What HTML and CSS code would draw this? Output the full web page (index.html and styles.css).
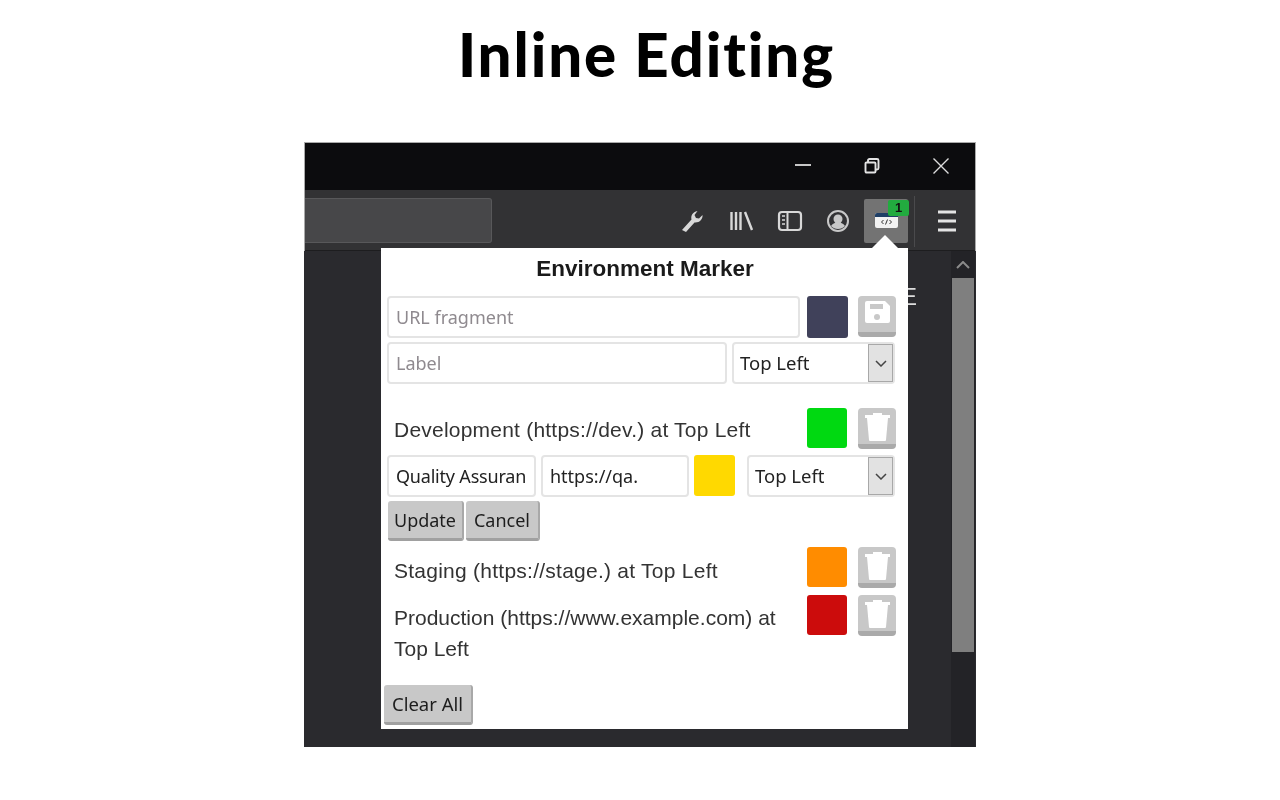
FILE: index.html
```html
<!DOCTYPE html>
<html lang="en">

<head>
    <meta charset="UTF-8">
    <meta name="viewport" content="width=device-width, initial-scale=1.0">
    <title>Inline Editing</title>
    <link rel="stylesheet" href="styles.css">
</head>

<body>

    <h1 class="page-title">Inline Editing</h1>

    <div class="window">
        <div class="titlebar">
            <svg class="win-icon" width="16" height="16" viewBox="0 0 16 16"><path d="M0 7h16" stroke="#ddd" stroke-width="1.800" fill="none"/></svg>
            <svg class="win-icon" width="16" height="16" viewBox="0 0 16 16"><path d="M4 4V2.500A1.500 1.500 0 0 1 5.500 1H13a1.500 1.500 0 0 1 1.500 1.500V10a1.500 1.500 0 0 1-1.500 1.500h-1.500M2.500 4.500h8a1 1 0 0 1 1 1v8a1 1 0 0 1-1 1h-8a1 1 0 0 1-1-1v-8a1 1 0 0 1 1-1z" stroke="#e4e4e4" stroke-width="1.900" fill="none"/></svg>
            <svg class="win-icon" width="16" height="16" viewBox="0 0 16 16"><path d="M0.500 0.500l15 15M15.500 0.500l-15 15" stroke="#ddd" stroke-width="1.400" fill="none"/></svg>
        </div>

        <div class="toolbar">
            <div class="urlbar"></div>
            <div class="tool-icons">
                <div class="tool tool-wrench">
                    <svg width="24" height="24" viewBox="0 0 24 24"><path d="M2 21l9.500-10.500c-1-3.500 1-7.500 6-8.500l-3 4 1.500 3 3 .5 3.500-3.500c.5 4-3 8-8 7.500l-8.500 9.500z" fill="#d8d8d8"/></svg>
                </div>
                <div class="tool">
                    <svg width="26" height="22" viewBox="0 0 26 22"><path d="M2.500 2v18M7 2v18M11.500 2v18M16 2l7 18" stroke="#d8d8d8" stroke-width="2.400" fill="none"/></svg>
                </div>
                <div class="tool">
                    <svg width="26" height="22" viewBox="0 0 26 22"><rect x="2" y="2" width="22" height="18" rx="3" stroke="#d8d8d8" stroke-width="2.200" fill="none"/><path d="M10.500 2v18" stroke="#d8d8d8" stroke-width="2"/><path d="M5 6h3M5 10h3M5 14h3" stroke="#d8d8d8" stroke-width="1.500"/></svg>
                </div>
                <div class="tool">
                    <svg width="24" height="24" viewBox="0 0 24 24"><circle cx="12" cy="12" r="10" stroke="#c8c8c8" stroke-width="2" fill="none"/><circle cx="12" cy="10" r="4.500" fill="#c8c8c8"/><path d="M5 17c2-3 4-3.500 7-3.500s5 .5 7 3.500c-2 2-4 3-7 3s-5-1-7-3z" fill="#c8c8c8"/></svg>
                </div>
                <div class="tool tool-active">
                    <svg width="26" height="22" viewBox="0 0 26 22"><rect x="2" y="3" width="23" height="15" rx="2" fill="#f2f2f2"/><path d="M2 5a2 2 0 0 1 2-2h19a2 2 0 0 1 2 2v2H2z" fill="#1f3f66"/><path d="M10.500 10l-2 2 2 2M16.500 10l2 2-2 2M14.500 9.500l-2 5" stroke="#333" stroke-width="1" fill="none"/></svg>
                    <span class="badge">1</span>
                </div>
            </div>
            <div class="tool-sep"></div>
            <div class="tool menu-tool">
                <svg width="20" height="22" viewBox="0 0 20 22"><path d="M1 2h18M1 11h18M1 20h18" stroke="#e4e4e4" stroke-width="3"/></svg>
            </div>
        </div>

        <div class="content">
            <span class="behind-text">E</span>
            <div class="scrollbar">
                <div class="scroll-up">
                    <svg width="14" height="8" viewBox="0 0 14 8"><path d="M1 7l6-6 6 6" stroke="#8a8a8a" stroke-width="2" fill="none"/></svg>
                </div>
                <div class="scroll-thumb"></div>
            </div>
        </div>

        <div class="popup">
            <div class="popup-arrow"></div>
            <div class="popup-title">Environment Marker</div>

            <div class="row row-new">
                <input class="field field-url" type="text" placeholder="URL fragment">
                <div class="swatch swatch-new"></div>
                <button class="icon-btn" type="button">
                    <svg width="25" height="22" viewBox="0 0 25 22"><path d="M2 0h18l5 5v15a2 2 0 0 1-2 2H2a2 2 0 0 1-2-2V2a2 2 0 0 1 2-2z" fill="#fff"/><rect x="5" y="3" width="13" height="5" fill="#c8c8c8"/><circle cx="12" cy="16" r="3" fill="#c8c8c8"/></svg>
                </button>
            </div>
            <div class="row row-label">
                <input class="field field-label" type="text" placeholder="Label">
                <div class="select select-wide">
                    <span class="select-value">Top Left</span>
                    <span class="select-arrow"><svg width="12" height="7" viewBox="0 0 12 7"><path d="M1 1l5 5 5-5" stroke="#444" stroke-width="1.500" fill="none"/></svg></span>
                </div>
            </div>

            <div class="row env env-dev">
                <div class="env-text">Development (https://dev.) at Top Left</div>
                <div class="swatch swatch-green"></div>
                <button class="icon-btn" type="button">
                    <svg width="25" height="28" viewBox="0 0 25 28"><path d="M0 3.500h25M8 1.500h9" stroke="#fff" stroke-width="3" fill="none"/><path d="M2 5h21l-2 22a1 1 0 0 1-1 1H5a1 1 0 0 1-1-1z" fill="#fff"/></svg>
                </button>
            </div>

            <div class="row row-edit">
                <input class="field field-name" type="text" value="Quality Assurance">
                <input class="field field-pattern" type="text" value="https://qa.">
                <div class="swatch swatch-yellow"></div>
                <div class="select select-narrow">
                    <span class="select-value">Top Left</span>
                    <span class="select-arrow"><svg width="12" height="7" viewBox="0 0 12 7"><path d="M1 1l5 5 5-5" stroke="#444" stroke-width="1.500" fill="none"/></svg></span>
                </div>
            </div>
            <div class="row row-actions">
                <button class="text-btn update-btn" type="button">Update</button>
                <button class="text-btn cancel-btn" type="button">Cancel</button>
            </div>

            <div class="row env env-stage">
                <div class="env-text">Staging (https://stage.) at Top Left</div>
                <div class="swatch swatch-orange"></div>
                <button class="icon-btn" type="button">
                    <svg width="25" height="28" viewBox="0 0 25 28"><path d="M0 3.500h25M8 1.500h9" stroke="#fff" stroke-width="3" fill="none"/><path d="M2 5h21l-2 22a1 1 0 0 1-1 1H5a1 1 0 0 1-1-1z" fill="#fff"/></svg>
                </button>
            </div>
            <div class="row env env-prod">
                <div class="env-text">Production (https://www.example.com) at Top Left</div>
                <div class="swatch swatch-red"></div>
                <button class="icon-btn" type="button">
                    <svg width="25" height="28" viewBox="0 0 25 28"><path d="M0 3.500h25M8 1.500h9" stroke="#fff" stroke-width="3" fill="none"/><path d="M2 5h21l-2 22a1 1 0 0 1-1 1H5a1 1 0 0 1-1-1z" fill="#fff"/></svg>
                </button>
            </div>

            <button class="text-btn clear-btn" type="button">Clear All</button>
        </div>
    </div>

</body>

</html>
```

FILE: styles.css
```css
html,
body {
    margin: 0;
    height: 800px;
    background-color: #fff;
    overflow: hidden;
}

.page-title {
    margin: 0;
    padding: 19px 0 0 13px;
    height: 142px;
    box-sizing: border-box;
    text-align: center;
    font-family: 'Lato', sans-serif;
    font-weight: 900;
    font-size: 60px;
    line-height: 70px;
    letter-spacing: 1.9px;
    font-variant-ligatures: none;
    color: #000;
    filter: blur(0.4px);
}

.window {
    position: relative;
    width: 672px;
    height: 605px;
    margin-left: 304px;
    display: flex;
    flex-direction: column;
    outline: 1px solid #aaa;
    outline-offset: -1px;
    filter: blur(0.4px);
}

.titlebar {
    height: 48px;
    background-color: #0c0c0e;
    display: flex;
    justify-content: flex-end;
    align-items: center;
    gap: 53px;
    padding-right: 27px;
    box-sizing: border-box;
}

.toolbar {
    height: 61px;
    background-color: #323234;
    border-bottom: 1px solid #1d1d1f;
    box-sizing: border-box;
    display: flex;
    align-items: flex-start;
    padding-top: 8px;
}

.urlbar {
    width: 188px;
    height: 45px;
    box-sizing: border-box;
    background-color: #474749;
    border: 1px solid #58585a;
    border-left: 0;
    border-radius: 0 3px 3px 0;
}

.tool-icons {
    display: flex;
    gap: 4px;
    margin: 1px 0 0 180px;
}

.tool {
    position: relative;
    width: 44px;
    height: 44px;
    display: flex;
    justify-content: center;
    align-items: center;
}

.tool-wrench {
    padding-right: 4px;
    box-sizing: border-box;
}

.tool-active {
    background-color: #737373;
    border-radius: 2px;
}

.badge {
    position: absolute;
    top: 1px;
    right: -1px;
    width: 21px;
    height: 16px;
    background-color: #22ab3f;
    border-radius: 2px;
    color: #111;
    font-family: 'Liberation Sans', sans-serif;
    font-weight: 700;
    font-size: 13px;
    line-height: 16px;
    text-align: center;
}

.tool-sep {
    width: 1px;
    height: 51px;
    margin: -2px 10px 0 6px;
    background-color: #4a4a4c;
}

.menu-tool {
    margin-top: 1px;
}

.content {
    position: relative;
    flex: 1;
    background-color: #2a2a2e;
    display: flex;
    justify-content: flex-end;
}

.behind-text {
    position: absolute;
    left: 597px;
    top: 32px;
    color: #ddd;
    font-family: 'Liberation Sans', sans-serif;
    font-size: 24px;
}

.scrollbar {
    width: 24px;
    margin-right: 1px;
    background-color: #232327;
}

.scroll-up {
    height: 27px;
    display: flex;
    justify-content: center;
    align-items: center;
}

.scroll-thumb {
    height: 374px;
    margin: 0 1px;
    background-color: #7f7f7f;
}

.popup {
    position: absolute;
    left: 77px;
    top: 106px;
    width: 527px;
    height: 481px;
    box-sizing: border-box;
    padding: 6px 11px 0 6px;
    background-color: #fff;
    font-family: 'Liberation Sans', sans-serif;
    color: #222;
}

.popup-arrow {
    position: absolute;
    right: 10px;
    top: -13px;
    width: 0;
    height: 0;
    border-left: 13px solid transparent;
    border-right: 13px solid transparent;
    border-bottom: 13px solid #fff;
}

.popup-title {
    height: 42px;
    padding-left: 6px;
    text-align: center;
    font-weight: 700;
    font-size: 22.5px;
    line-height: 30px;
    color: #1a1a1a;
}

.row {
    display: flex;
    align-items: flex-start;
}

.row-new {
    height: 46px;
}

.row-new .icon-btn {
    margin-left: 10px;
}

.row-label {
    height: 66px;
    gap: 5px;
}

.row-edit {
    height: 46px;
    gap: 5px;
}

.row-actions {
    height: 46px;
    gap: 2px;
    padding-left: 1px;
}

.field {
    height: 42px;
    box-sizing: border-box;
    padding: 0 7px;
    border: 2px solid #e4e4e4;
    border-radius: 4px;
    background-color: #fff;
    font-family: 'Noto Sans', sans-serif;
    font-size: 18px;
    color: #222;
    outline: none;
}

.field::placeholder {
    color: #8f8a8f;
    opacity: 1;
}

.field-url {
    width: 413px;
}

.field-label {
    width: 340px;
}

.field-name {
    width: 149px;
    letter-spacing: -0.2px;
}

.field-pattern {
    width: 148px;
}

.swatch {
    width: 40px;
    height: 40px;
    border-radius: 3px;
    flex-shrink: 0;
}

.swatch-new {
    width: 41px;
    height: 42px;
    margin-left: 7px;
    background-color: #40415a;
}

.swatch-green {
    background-color: #00d911;
}

.swatch-yellow {
    background-color: #ffd900;
}

.swatch-orange {
    background-color: #ff8c00;
}

.swatch-red {
    background-color: #cc0c0c;
}

.row-edit .swatch {
    width: 41px;
    height: 41px;
}

.select {
    display: flex;
    height: 42px;
    box-sizing: border-box;
    border: 2px solid #e4e4e4;
    border-radius: 4px;
    background-color: #fff;
    font-family: 'Noto Sans', sans-serif;
    font-size: 18.500px;
    color: #222;
}

.select-wide {
    width: 163px;
}

.select-narrow {
    width: 148px;
    margin-left: 7px;
}

.select-value {
    flex: 1;
    padding-left: 6px;
    line-height: 38px;
}

.select-arrow {
    width: 25px;
    box-sizing: border-box;
    display: flex;
    justify-content: center;
    align-items: center;
    background-color: #e2e2e2;
    border: 1px solid #a8a8a8;
}

.icon-btn {
    width: 38px;
    height: 41px;
    margin-left: 11px;
    padding: 5px 0 1px;
    box-sizing: border-box;
    display: flex;
    justify-content: center;
    align-items: flex-start;
    flex-shrink: 0;
    background-color: #c8c8c8;
    border: 0;
    border-bottom: 5px solid #aaa;
    border-radius: 4px;
    overflow: hidden;
}

.env {
    padding-left: 7px;
    height: 47px;
}

.env-text {
    width: 413px;
    font-size: 21px;
    line-height: 31px;
    padding-top: 7px;
    color: #333;
}

.env-dev {
    height: 47px;
}

.env-dev .env-text {
    padding-top: 6px;
    letter-spacing: 0.22px;
}

.env-stage {
    height: 48px;
}

.env-stage .env-text {
    padding-top: 8px;
    letter-spacing: 0.25px;
}

.env-prod {
    height: 90px;
}

.text-btn {
    height: 40px;
    box-sizing: border-box;
    background-color: #c8c8c8;
    border: 0;
    border-right: 2px solid #a8a8a8;
    border-bottom: 3px solid #a0a0a0;
    border-radius: 3px;
    font-family: 'Noto Sans', sans-serif;
    font-size: 18px;
    color: #1d1d1d;
}

.update-btn {
    width: 76px;
    padding: 0;
}

.cancel-btn {
    width: 74px;
    padding: 0;
}

.clear-btn {
    width: 89px;
    margin-left: -3px;
    padding: 0;
    font-size: 18.500px;
}
```
